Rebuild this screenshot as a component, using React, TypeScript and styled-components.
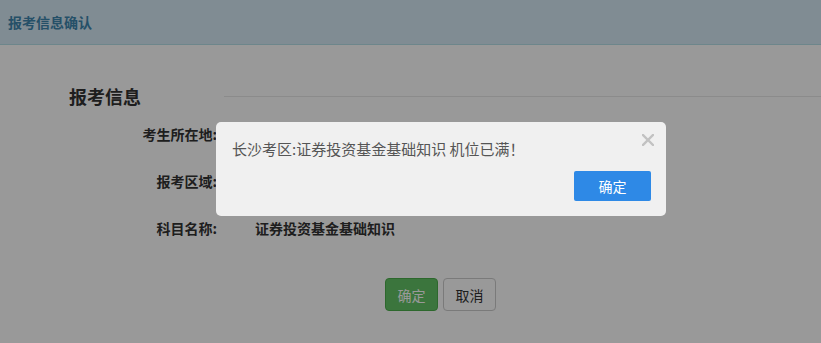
import React from "react";
import styled, { createGlobalStyle } from "styled-components";

const GlobalStyle = createGlobalStyle`
  html, body {
    margin: 0;
    padding: 0;
    background: #ffffff;
    font-family: "Noto Sans CJK SC", "Liberation Sans", sans-serif;
  }
`;

// 页面
const Page = styled.div`
  position: relative;
  width: 821px;
  height: 343px;
  overflow: hidden;
`;

const Header = styled.div`
  height: 44px;
  display: flex;
  align-items: center;
  padding-left: 8px;
  background: #d5e9f5;
  border-bottom: 1px solid #b6e0e8;
`;

const HeaderTitle = styled.h1`
  margin: 0;
  font-size: 14px;
  line-height: 20px;
  font-weight: 700;
  color: #3f86ae;
`;

const Main = styled.div`
  padding: 39px 0 0 69px;
`;

const SectionHead = styled.div`
  display: flex;
  align-items: center;
  height: 24px;
`;

const SectionTitle = styled.h2`
  margin: 0;
  font-size: 18px;
  line-height: 24px;
  font-weight: 700;
  color: #333;
`;

const SectionLine = styled.div`
  flex: 1;
  margin-left: 83px;
  border-top: 1px solid #e8e8e8;
`;

const InfoList = styled.div`
  margin-top: 2px;
`;

const InfoRow = styled.div`
  display: grid;
  grid-template-columns: 148px auto;
  column-gap: 38px;
  align-items: center;
  height: 47px;
`;

const Label = styled.span`
  text-align: right;
  font-size: 14px;
  line-height: 20px;
  font-weight: 700;
  color: #333;
`;

const Value = styled.span`
  font-size: 14px;
  line-height: 20px;
  font-weight: 700;
  color: #333;
`;

const Actions = styled.div`
  display: flex;
  gap: 5px;
  margin: 27px 0 0 316px;
`;

const Button = styled.button<{ $primary?: boolean }>`
  width: 53px;
  height: 33px;
  padding: 0;
  border-radius: 4px;
  font-family: inherit;
  font-size: 14px;
  cursor: pointer;
  border: 1px solid ${(p) => (p.$primary ? "#4cae4c" : "#cccccc")};
  background: ${(p) => (p.$primary ? "#63c466" : "#ffffff")};
  color: ${(p) => (p.$primary ? "#ffffff" : "#333333")};
`;

// 遮罩 + 弹窗
const Mask = styled.div`
  position: absolute;
  inset: 0;
  background: rgba(0, 0, 0, 0.4);
`;

const Dialog = styled.div`
  position: absolute;
  left: 216px;
  top: 122px;
  width: 450px;
  height: 94px;
  box-sizing: border-box;
  padding: 17px 15px 15px 16px;
  background: #f0f0f0;
  border-radius: 5px;
  display: flex;
  flex-direction: column;
`;

const Message = styled.p`
  margin: 0;
  font-size: 15px;
  line-height: 20px;
  color: #555;
`;

const DialogFooter = styled.div`
  margin-top: auto;
  display: flex;
  justify-content: flex-end;
`;

const DialogButton = styled.button`
  width: 77px;
  height: 30px;
  padding: 0;
  border: none;
  border-radius: 2px;
  background: #2e89e6;
  color: #fff;
  font-family: inherit;
  font-size: 14px;
  cursor: pointer;
`;

const Close = styled.button`
  position: absolute;
  top: 10px;
  right: 10px;
  width: 16px;
  height: 16px;
  padding: 0;
  border: none;
  background: transparent;
  display: flex;
  align-items: center;
  justify-content: center;
  cursor: pointer;
`;

const rows = [
  { label: "考生所在地:", value: "" },
  { label: "报考区域:", value: "" },
  { label: "科目名称:", value: "证券投资基金基础知识" },
];

const App: React.FC = () => {
  return (
    <Page>
      <GlobalStyle />
      <Header>
        <HeaderTitle>报考信息确认</HeaderTitle>
      </Header>
      <Main>
        <SectionHead>
          <SectionTitle>报考信息</SectionTitle>
          <SectionLine />
        </SectionHead>
        <InfoList>
          {rows.map((r) => (
            <InfoRow key={r.label}>
              <Label>{r.label}</Label>
              <Value>{r.value}</Value>
            </InfoRow>
          ))}
        </InfoList>
        <Actions>
          <Button $primary>确定</Button>
          <Button>取消</Button>
        </Actions>
      </Main>

      <Mask />
      <Dialog>
        <Close aria-label="关闭">
          <svg width="12" height="12" viewBox="0 0 12 12">
            <path d="M1 1L11 11M11 1L1 11" stroke="#c2c2c2" strokeWidth="2.4" strokeLinecap="square" />
          </svg>
        </Close>
        <Message>长沙考区:证券投资基金基础知识 机位已满！</Message>
        <DialogFooter>
          <DialogButton>确定</DialogButton>
        </DialogFooter>
      </Dialog>
    </Page>
  );
};

export default App;
